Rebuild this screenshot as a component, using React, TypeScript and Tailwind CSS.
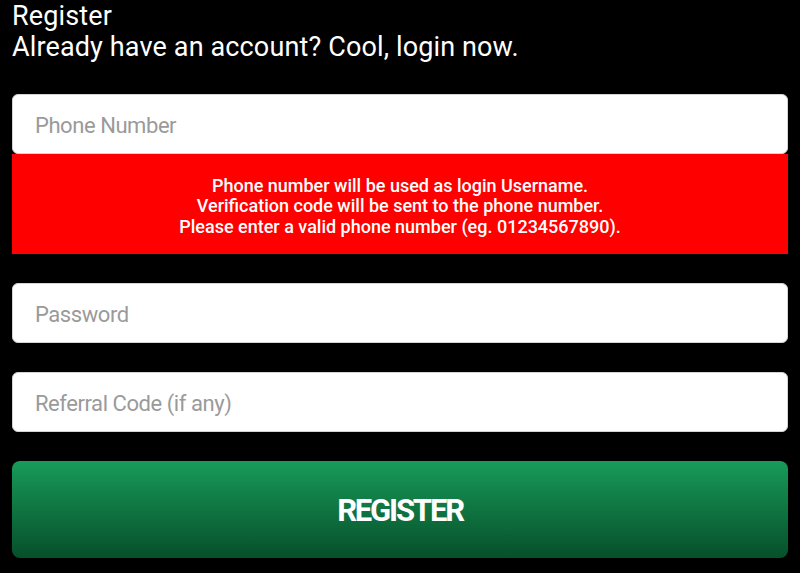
import { useState } from "react"

const Field = ({ placeholder, value, onChange, type = "text" }: { placeholder: string; value: string; onChange: (v: string) => void; type?: string }) => (
  <input
    type={type}
    value={value}
    onChange={e => onChange(e.target.value)}
    placeholder={placeholder}
    className="block w-full h-[60px] bg-white rounded-md border border-[#d4d4d4] px-[22px] pt-[3px] text-[22px] text-[#333] placeholder:text-[#9a9a9a] outline-none tracking-[-0.02em]"
  />
)

const App = () => {
  const [phone, setPhone] = useState('')
  const [password, setPassword] = useState('')
  const [referral, setReferral] = useState('')

  return (
    <div className="min-h-screen bg-black px-3 pt-[1px] font-['Roboto',sans-serif] text-white">
      <div className="text-[27px] leading-[31px] tracking-[0.005em]">
        <div>Register</div>
        <div>Already have an account? Cool, login now.</div>
      </div>

      <form onSubmit={e => e.preventDefault()} className="mt-[31px]">
        <Field placeholder="Phone Number" value={phone} onChange={setPhone} />
        <div className="h-[100px] bg-[#ff0000] flex flex-col items-center justify-center pt-[5px] text-[18px] leading-[20.5px] font-medium text-center">
          <span>Phone number will be used as login Username.</span>
          <span>Verification code will be sent to the phone number.</span>
          <span>Please enter a valid phone number (eg. 01234567890).</span>
        </div>

        <div className="mt-[29px]">
          <Field placeholder="Password" type="password" value={password} onChange={setPassword} />
        </div>
        <div className="mt-[29px]">
          <Field placeholder="Referral Code (if any)" value={referral} onChange={setReferral} />
        </div>

        <button
          type="submit"
          className="mt-[29px] w-full h-[97px] rounded-lg bg-gradient-to-b from-[#189b5a] to-[#07502a] pt-[3px] text-[31px] font-bold tracking-[-0.07em] text-white"
        >
          REGISTER
        </button>
      </form>
    </div>
  )
}

export default App
